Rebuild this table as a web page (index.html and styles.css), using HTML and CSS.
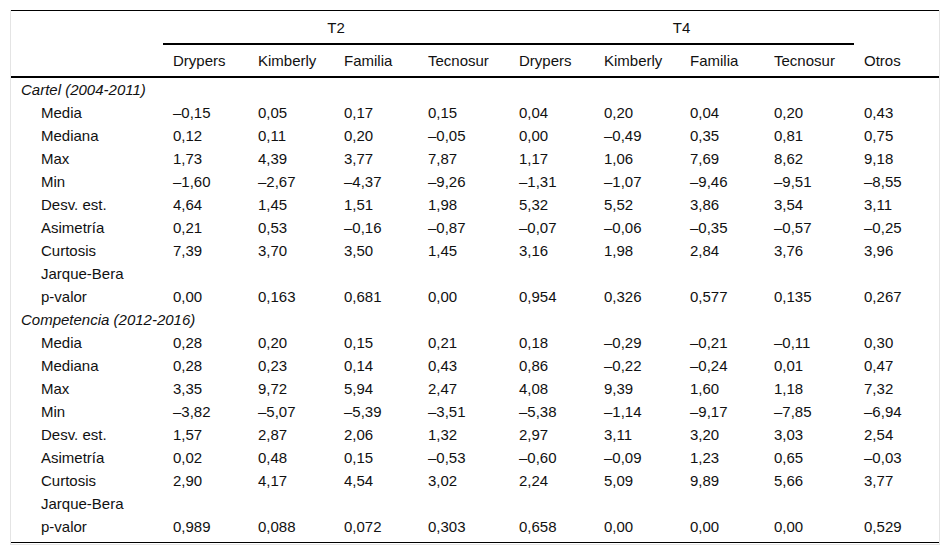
FILE: index.html
```html
<!DOCTYPE html>
<html lang="es">
<head>
<meta charset="utf-8">
<title>Tabla</title>
<link rel="stylesheet" href="styles.css">
</head>
<body>
<div class="frame">
<table class="stats">
<colgroup>
<col class="c-label"><col class="c85"><col class="c86"><col class="c84"><col class="c91"><col class="c85"><col class="c86"><col class="c84"><col class="c90"><col class="c85">
</colgroup>
<thead>
<tr class="h1"><th></th><th colspan="4" class="grp">T2</th><th colspan="4" class="grp">T4</th><th></th></tr>
<tr class="h2"><th></th><th>Drypers</th><th>Kimberly</th><th>Familia</th><th>Tecnosur</th><th>Drypers</th><th>Kimberly</th><th>Familia</th><th>Tecnosur</th><th>Otros</th></tr>
</thead>
<tbody>
<tr><td class="section" colspan="10">Cartel (2004-2011)</td></tr>
<tr><td class="lbl">Media</td><td>–0,15</td><td>0,05</td><td>0,17</td><td>0,15</td><td>0,04</td><td>0,20</td><td>0,04</td><td>0,20</td><td>0,43</td></tr>
<tr><td class="lbl">Mediana</td><td>0,12</td><td>0,11</td><td>0,20</td><td>–0,05</td><td>0,00</td><td>–0,49</td><td>0,35</td><td>0,81</td><td>0,75</td></tr>
<tr><td class="lbl">Max</td><td>1,73</td><td>4,39</td><td>3,77</td><td>7,87</td><td>1,17</td><td>1,06</td><td>7,69</td><td>8,62</td><td>9,18</td></tr>
<tr><td class="lbl">Min</td><td>–1,60</td><td>–2,67</td><td>–4,37</td><td>–9,26</td><td>–1,31</td><td>–1,07</td><td>–9,46</td><td>–9,51</td><td>–8,55</td></tr>
<tr><td class="lbl">Desv. est.</td><td>4,64</td><td>1,45</td><td>1,51</td><td>1,98</td><td>5,32</td><td>5,52</td><td>3,86</td><td>3,54</td><td>3,11</td></tr>
<tr><td class="lbl">Asimetría</td><td>0,21</td><td>0,53</td><td>–0,16</td><td>–0,87</td><td>–0,07</td><td>–0,06</td><td>–0,35</td><td>–0,57</td><td>–0,25</td></tr>
<tr><td class="lbl">Curtosis</td><td>7,39</td><td>3,70</td><td>3,50</td><td>1,45</td><td>3,16</td><td>1,98</td><td>2,84</td><td>3,76</td><td>3,96</td></tr>
<tr><td class="lbl">Jarque-Bera</td><td></td><td></td><td></td><td></td><td></td><td></td><td></td><td></td><td></td></tr>
<tr><td class="lbl">p-valor</td><td>0,00</td><td>0,163</td><td>0,681</td><td>0,00</td><td>0,954</td><td>0,326</td><td>0,577</td><td>0,135</td><td>0,267</td></tr>
<tr><td class="section" colspan="10">Competencia (2012-2016)</td></tr>
<tr><td class="lbl">Media</td><td>0,28</td><td>0,20</td><td>0,15</td><td>0,21</td><td>0,18</td><td>–0,29</td><td>–0,21</td><td>–0,11</td><td>0,30</td></tr>
<tr><td class="lbl">Mediana</td><td>0,28</td><td>0,23</td><td>0,14</td><td>0,43</td><td>0,86</td><td>–0,22</td><td>–0,24</td><td>0,01</td><td>0,47</td></tr>
<tr><td class="lbl">Max</td><td>3,35</td><td>9,72</td><td>5,94</td><td>2,47</td><td>4,08</td><td>9,39</td><td>1,60</td><td>1,18</td><td>7,32</td></tr>
<tr><td class="lbl">Min</td><td>–3,82</td><td>–5,07</td><td>–5,39</td><td>–3,51</td><td>–5,38</td><td>–1,14</td><td>–9,17</td><td>–7,85</td><td>–6,94</td></tr>
<tr><td class="lbl">Desv. est.</td><td>1,57</td><td>2,87</td><td>2,06</td><td>1,32</td><td>2,97</td><td>3,11</td><td>3,20</td><td>3,03</td><td>2,54</td></tr>
<tr><td class="lbl">Asimetría</td><td>0,02</td><td>0,48</td><td>0,15</td><td>–0,53</td><td>–0,60</td><td>–0,09</td><td>1,23</td><td>0,65</td><td>–0,03</td></tr>
<tr><td class="lbl">Curtosis</td><td>2,90</td><td>4,17</td><td>4,54</td><td>3,02</td><td>2,24</td><td>5,09</td><td>9,89</td><td>5,66</td><td>3,77</td></tr>
<tr><td class="lbl">Jarque-Bera</td><td></td><td></td><td></td><td></td><td></td><td></td><td></td><td></td><td></td></tr>
<tr class="last"><td class="lbl">p-valor</td><td>0,989</td><td>0,088</td><td>0,072</td><td>0,303</td><td>0,658</td><td>0,00</td><td>0,00</td><td>0,00</td><td>0,529</td></tr>
</tbody>
</table>
</div>
</body>
</html>
```

FILE: styles.css
```css
html, body {
  margin: 0;
  padding: 0;
  background: #fff;
}
body {
  padding: 10px 0 0 10px;
  font-family: "Liberation Sans", Arial, sans-serif;
  font-size: 15px;
  color: #111;
}
.frame {
  width: 928px;
  border: 1px solid #e4e4e4;
  border-top: none;
  padding-bottom: 1px;
}
.stats {
  width: 928px;
  table-layout: fixed;
  border-collapse: collapse;
  border-top: 1px solid #000;
  border-bottom: 1px solid #000;
}
.c-label { width: 152px; }
.c84 { width: 84px; }
.c85 { width: 85px; }
.c86 { width: 86px; }
.c90 { width: 90px; }
.c91 { width: 91px; }
.stats th {
  font-weight: normal;
  text-align: left;
  padding: 0 10px;
  height: 32px;
  white-space: nowrap;
}
.stats th.grp {
  text-align: center;
  border-bottom: 2px solid #000;
}
.stats tr.h1 th { height: 32px; }
.stats tr.h2 th { height: 31px; border-bottom: 2px solid #000; }
.stats td {
  padding: 0 10px;
  height: 23px;
  line-height: 23px;
  white-space: nowrap;
}
.stats td.section {
  font-style: italic;
}
.stats td.lbl {
  padding-left: 30px;
}
.stats tr.last td {
  height: 23px;
  padding-bottom: 4px;
}
```
